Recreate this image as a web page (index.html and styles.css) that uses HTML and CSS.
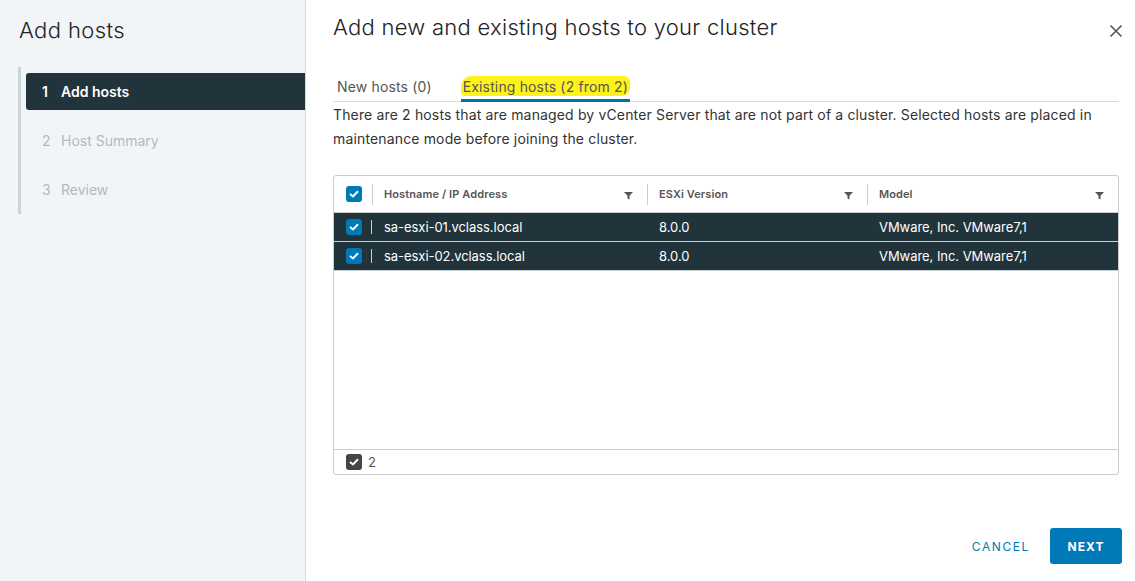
FILE: index.html
```html
<!DOCTYPE html>
<html>
<head>
<meta charset="utf-8">
<link rel="stylesheet" href="styles.css">
</head>
<body>
<div class="wizard">
  <aside class="side">
    <h1 class="side-title">Add hosts</h1>
    <nav class="steps">
      <div class="step active"><span class="num">1</span><span>Add hosts</span></div>
      <div class="step"><span class="num">2</span><span>Host Summary</span></div>
      <div class="step"><span class="num">3</span><span>Review</span></div>
    </nav>
  </aside>
  <main class="content">
    <header class="head">
      <h2 class="title">Add new and existing hosts to your cluster</h2>
      <button class="close" aria-label="Close">
        <svg width="14" height="14" viewBox="0 0 14 14"><path d="M1.5 1.5 L12.5 12.5 M12.5 1.5 L1.5 12.5" stroke="#49555c" stroke-width="1.6" fill="none"/></svg>
      </button>
    </header>
    <div class="tabs">
      <div class="tab">New hosts (0)</div>
      <div class="tab current"><span class="hl">Existing hosts (2 from 2)</span></div>
    </div>
    <p class="desc">There are 2 hosts that are managed by vCenter Server that are not part of a cluster. Selected hosts are placed in maintenance mode before joining the cluster.</p>
    <div class="grid">
      <div class="row header">
        <div class="cell sel"><span class="cb"><svg width="10" height="8" viewBox="0 0 10 8"><path d="M1 4 L4 6.5 L9 1.2" stroke="#fff" stroke-width="2" fill="none"/></svg></span></div>
        <div class="cell col1"><span class="sep"></span><span class="htext">Hostname / IP Address</span><svg class="filter" width="9" height="9" viewBox="0 0 9 9"><path d="M0 1 H9 L5.5 4.8 V8.5 L3.5 7.5 V4.8 Z" fill="#555"/></svg></div>
        <div class="cell col2"><span class="sep"></span><span class="htext">ESXi Version</span><svg class="filter" width="9" height="9" viewBox="0 0 9 9"><path d="M0 1 H9 L5.5 4.8 V8.5 L3.5 7.5 V4.8 Z" fill="#555"/></svg></div>
        <div class="cell col3"><span class="sep"></span><span class="htext">Model</span><svg class="filter" width="9" height="9" viewBox="0 0 9 9"><path d="M0 1 H9 L5.5 4.8 V8.5 L3.5 7.5 V4.8 Z" fill="#555"/></svg></div>
      </div>
      <div class="row data">
        <div class="cell sel"><span class="cb"><svg width="10" height="8" viewBox="0 0 10 8"><path d="M1 4 L4 6.5 L9 1.2" stroke="#fff" stroke-width="2" fill="none"/></svg></span><span class="dsep"></span></div>
        <div class="cell col1">sa-esxi-01.vclass.local</div>
        <div class="cell col2">8.0.0</div>
        <div class="cell col3">VMware, Inc. VMware7,1</div>
      </div>
      <div class="row data">
        <div class="cell sel"><span class="cb"><svg width="10" height="8" viewBox="0 0 10 8"><path d="M1 4 L4 6.5 L9 1.2" stroke="#fff" stroke-width="2" fill="none"/></svg></span><span class="dsep"></span></div>
        <div class="cell col1">sa-esxi-02.vclass.local</div>
        <div class="cell col2">8.0.0</div>
        <div class="cell col3">VMware, Inc. VMware7,1</div>
      </div>
      <div class="empty"></div>
      <div class="foot">
        <span class="cb dark"><svg width="10" height="8" viewBox="0 0 10 8"><path d="M1 4 L4 6.5 L9 1.2" stroke="#fff" stroke-width="2" fill="none"/></svg></span>
        <span class="count">2</span>
      </div>
    </div>
    <div class="actions">
      <button class="btn-link">CANCEL</button>
      <button class="btn-primary">NEXT</button>
    </div>
  </main>
</div>
</body>
</html>
```
FILE: styles.css
```css
* { box-sizing: border-box; }
html, body { margin: 0; padding: 0; }
body {
  width: 1135px;
  height: 581px;
  overflow: hidden;
  font-family: "Inter", "Open Sans", sans-serif;
  color: #333;
  background: #fff;
}
.wizard {
  display: flex;
  height: 581px;
}
.side {
  width: 306px;
  flex: none;
  background: #f1f5f8;
  border-right: 1px solid #d5dadd;
  padding-top: 15px;
}
.side-title {
  margin: 0 0 0 19px;
  font-size: 22px;
  font-weight: 300;
  color: #222;
  line-height: 30px;
  letter-spacing: 0.4px;
}
.steps {
  margin: 22px 0 0 18px;
  border-left: 3px solid #ccd4d8;
  padding: 6px 0 6px 5px;
  display: flex;
  flex-direction: column;
  gap: 12px;
}
.step {
  height: 37px;
  display: flex;
  align-items: center;
  padding-left: 16px;
  font-size: 14px;
  color: #b3b9bd;
  border-radius: 3px 0 0 3px;
}
.step .num { width: 19px; }
.step.active {
  background: #21333b;
  color: #fff;
  font-weight: 600;
}
.content {
  flex: 1;
  padding: 0 16px 0 27px;
  display: flex;
  flex-direction: column;
  position: relative;
}
.head {
  display: flex;
  justify-content: space-between;
  align-items: center;
  height: 56px;
}
.title {
  margin: 0;
  font-size: 22px;
  font-weight: 300;
  color: #222;
  margin-top: -2px;
  letter-spacing: 0.27px;
}
.close {
  border: 0;
  background: none;
  padding: 0;
  margin-top: 6px;
  margin-right: -4px;
  display: flex;
}
.tabs {
  display: flex;
  gap: 25px;
  border-bottom: 1px solid #d6dbdd;
  margin-top: 18px;
  height: 28px;
}
.tab {
  font-size: 14px;
  color: #555;
  padding: 0 4px;
  line-height: 26px;
  letter-spacing: 0.15px;
}
.tab.current {
  color: #555;
  border-bottom: 3px solid #0072a3;
  height: 28px;
  padding: 0;
}
.hl {
  background: #fdf21c;
  border-radius: 10px 6px 8px 4px;
  padding: 1px 2px;
  box-shadow: 0 -1px 0 #fdf21c;
}
.desc {
  margin: 1px 0 0 0;
  font-size: 14px;
  line-height: 24px;
  color: #333;
  letter-spacing: 0.15px;
}
.grid {
  margin-top: 24px;
  border: 1px solid #ccc;
  border-radius: 3px;
  height: 300px;
  display: flex;
  flex-direction: column;
}
.row {
  display: flex;
  align-items: center;
}
.row.header {
  height: 37px;
  border-bottom: 1px solid #ccc;
}
.row.data {
  height: 29px;
  background: #21333b;
  color: #fff;
  font-size: 13px;
  letter-spacing: -0.05px;
  border-bottom: 1px solid #c8d0d4;
}
.cell {
  display: flex;
  align-items: center;
  height: 100%;
  position: relative;
}
.cell.sel { width: 38px; padding-left: 12px; }
.cell.col1 { width: 275px; padding-left: 12px; }
.cell.col2 { width: 220px; padding-left: 12px; }
.cell.col3 { flex: 1; padding-left: 12px; }
.sep {
  position: absolute;
  left: 0;
  top: 8px;
  bottom: 7px;
  width: 1px;
  background: #ccc;
}
.dsep {
  position: absolute;
  right: 0;
  top: 7px;
  bottom: 7px;
  width: 1px;
  background: #c9d0d3;
}
.htext {
  font-size: 11px;
  font-weight: 600;
  color: #555;
  letter-spacing: 0.1px;
}
.filter {
  margin-left: auto;
  margin-right: 14px;
  margin-top: 3px;
}
.cb {
  width: 16px;
  height: 16px;
  border-radius: 3px;
  background: #0079b8;
  display: flex;
  align-items: center;
  justify-content: center;
}
.cb.dark { background: #454545; }
.empty { flex: 1; }
.foot {
  height: 25px;
  border-top: 1px solid #ccc;
  display: flex;
  align-items: center;
  padding-left: 12px;
  gap: 6px;
}
.count { font-size: 13px; color: #555; }
.actions {
  margin-top: auto;
  margin-bottom: 17px;
  display: flex;
  justify-content: flex-end;
  align-items: center;
  gap: 16px;
  margin-right: -3px;
}
.btn-link {
  border: 0;
  background: none;
  color: #0079b8;
  font-family: inherit;
  font-size: 12px;
  letter-spacing: 1.6px;
  padding: 0 4px;
}
.btn-primary {
  border: 0;
  background: #0079b8;
  color: #fff;
  font-family: inherit;
  font-size: 12px;
  font-weight: 700;
  letter-spacing: 1px;
  border-radius: 3px;
  width: 72px;
  height: 36px;
}
```
